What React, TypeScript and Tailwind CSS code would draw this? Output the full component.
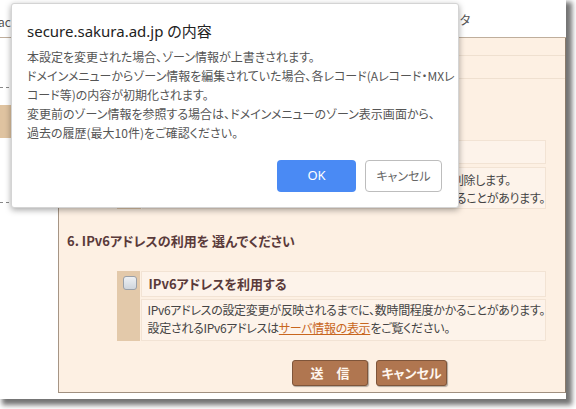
import React from "react";

export default function App() {
  return (
    <div className="relative w-[576px] h-[409px] bg-white overflow-hidden [font-family:'Noto_Sans_CJK_JP',sans-serif] [font-feature-settings:'palt']">
      {/* page with drop shadow */}
      <div className="w-[566px] h-[399px] bg-white shadow-[4px_4px_5px_2px_rgba(0,0,0,0.55)] flex flex-col">
        {/* header */}
        <div className="h-[38px] shrink-0 border-b border-[#bfae9c] flex items-start text-[12px] text-[#555]">
          <span className="ml-[-2px] mt-[14px] leading-[16px]">ac</span>
          <span className="ml-[449px] mt-[12px] leading-[16px]">タ</span>
        </div>
        <div className="flex flex-1">
          {/* sidebar */}
          <div className="w-[58px] shrink-0 flex flex-col bg-white">
            <div className="mt-[49px] h-px w-[9px] border-t border-dashed border-[#888]" />
            <div className="mt-[17px] h-[33px] w-[58px] bg-[#dfc3a0]" />
            <div className="mt-[64px] h-px w-[9px] border-t border-dashed border-[#888]" />
          </div>
          {/* main panel */}
          <div className="w-[508px] h-[355px] bg-[#fdf0e3] border-l border-[#a69585] border-r border-r-[#8a7a6a] border-b border-b-[#a09080] flex flex-col">
            <div className="h-[18px] border-b border-[#efe0d0]" />
            <div className="h-[23px] border-b border-[#efe0d0]" />

            {/* section 5 (mostly hidden behind the dialog) */}
            <div className="mt-[61px] ml-[58px] w-[429px] flex">
              <div className="w-[28px] bg-[#e3c9aa]" />
              <div className="ml-px flex-1 flex flex-col gap-[3px]">
                <div className="h-[24px] bg-[#fdf3ea] border border-[#f2e3d4]" />
                <div className="h-[42px] bg-[#fdf3ea] border border-[#f2e3d4] pl-[312px] pt-[3px] text-[12px] leading-[18px] text-[#444] whitespace-nowrap overflow-hidden tracking-[-0.3px]">
                  <div className="ml-[-3px]">削除します。</div>
                  <div className="ml-[1px]">ることがあります。</div>
                </div>
              </div>
            </div>

            {/* heading */}
            <div className="mt-[22px] h-[20px] pl-[8px] text-[13px] leading-[20px] font-bold text-[#5a3a3a] whitespace-nowrap">
              6. IPv6アドレスの利用を 選んでください
            </div>

            {/* section 6 */}
            <div className="mt-[20px] ml-[58px] w-[429px] flex">
              <div className="w-[28px] bg-[#e3c9aa] pl-[6px] pt-[5px]">
                <div className="w-[14px] h-[14px] rounded-[3px] border border-[#9aa0a8] bg-[linear-gradient(#eef1f4,#cfd5dc)]" />
              </div>
              <div className="ml-px flex-1 flex flex-col gap-[2px]">
                <div className="h-[26px] bg-[#fdf3ea] border border-[#f2e3d4] pl-[6px] flex items-center text-[13px] font-bold text-[#5a3a3a] whitespace-nowrap">
                  IPv6アドレスを利用する
                </div>
                <div className="h-[42px] bg-[#fdf3ea] border border-[#f2e3d4] pl-[5px] pt-px text-[12px] leading-[18px] text-[#444] whitespace-nowrap overflow-hidden tracking-[-0.3px]">
                  <div>IPv6アドレスの設定変更が反映されるまでに、数時間程度かかることがあります。</div>
                  <div>
                    設定されるIPv6アドレスは
                    <span className="text-[#c8661e] underline">サーバ情報の表示</span>
                    をご覧ください。
                  </div>
                </div>
              </div>
            </div>

            {/* form buttons */}
            <div className="mt-[19px] ml-[233px] flex gap-[8px]">
              <button className="w-[76px] h-[26px] bg-[#b07650] border border-[#7f553a] rounded-[3px] text-[#fff6ee] font-bold text-[13px] shadow-[1px_1px_1px_rgba(0,0,0,0.3)]">
                送　信
              </button>
              <button className="w-[71px] h-[26px] bg-[#b07650] border border-[#7f553a] rounded-[3px] text-[#fff6ee] font-bold text-[13px] shadow-[1px_1px_1px_rgba(0,0,0,0.3)]">
                キャンセル
              </button>
            </div>
          </div>
        </div>
      </div>

      {/* confirm dialog */}
      <div className="absolute left-[11px] top-[3px] w-[448px] h-[205px] bg-white border border-[#d4d4d4] rounded-[3px] shadow-[0_2px_6px_rgba(0,0,0,0.35)] flex flex-col px-[15px] pt-[17px]">
        <div className="text-[15px] leading-[20px] text-[#222] [font-family:'Noto_Sans','Noto_Sans_CJK_JP',sans-serif]">
          secure.sakura.ad.jp の内容
        </div>
        <div className="mt-[6px] text-[12px] leading-[19px] text-[#555] whitespace-nowrap">
          <div>本設定を変更された場合、ゾーン情報が上書きされます。</div>
          <div>ドメインメニューからゾーン情報を編集されていた場合、各レコード(Aレコード・MXレ</div>
          <div>コード等)の内容が初期化されます。</div>
          <div>変更前のゾーン情報を参照する場合は、ドメインメニューのゾーン表示画面から、</div>
          <div>過去の履歴(最大10件)をご確認ください。</div>
        </div>
        <div className="mt-[18px] flex justify-end gap-[9px] pr-px">
          <button className="w-[79px] h-[32px] bg-[#4a8af4] rounded-[4px] text-white text-[13px] [font-family:'Noto_Sans',sans-serif]">
            OK
          </button>
          <button className="w-[77px] h-[32px] bg-white border border-[#bdbdbd] rounded-[4px] text-[#666] text-[12px]">
            キャンセル
          </button>
        </div>
      </div>
    </div>
  );
}
